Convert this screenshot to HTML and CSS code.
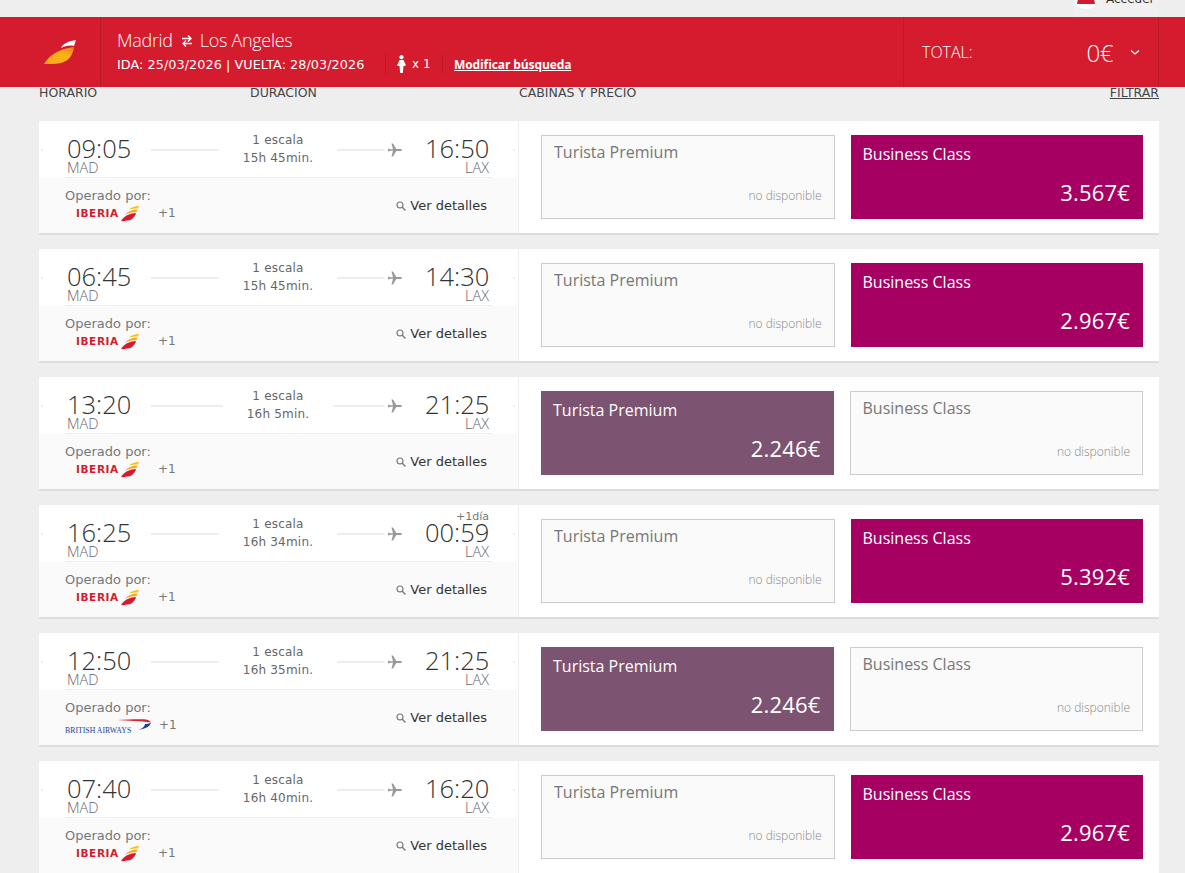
FILE: index.html
```html
<!DOCTYPE html>
<html lang="es">
<head>
    <meta charset="UTF-8">
    <title>Iberia - Resultados</title>
    <link rel="stylesheet" href="styles.css">
</head>
<body>

<!-- iconos repetidos -->
<svg class="sprites">
    <symbol id="plane" viewBox="0 0 14 14"><path d="M0 5.800 H1 L2 6.200 H5 L3.500 0.500 H5 L8.300 6 H12.500 C14.300 6 14.300 8 12.500 8 H8.300 L5 13.500 H3.500 L5 7.800 H2 L1 8.200 H0 Z" fill="#999"/></symbol>
    <symbol id="wing" viewBox="0 0 18 15"><path d="M0 15 C3 10 8 7.500 15 7 C14 11 11 14 7 14.500 C4 15 2 15 0 15 Z" fill="#d51b2e"/><path d="M4 9 C7 5 12 3.500 16.500 3.500 L15.500 6 C11 6 7 7 4 9 Z" fill="#f6a81c"/><path d="M8 3.500 C10 1.500 14 0 18 0 L17 2.500 C14 2.500 11 2.500 8 3.500 Z" fill="#f6c21c"/></symbol>
    <symbol id="lens" viewBox="0 0 10 10"><circle cx="4" cy="4" r="3" fill="none" stroke="#777" stroke-width="1.100"/><path d="M6.300 6.300 L9.500 9.500" stroke="#777" stroke-width="1.300"/></symbol>
</svg>

<div class="top-bar">
    <div class="login">
        <span class="login-icon"><svg width="18" height="16" viewBox="0 0 18 16"><path d="M3 0 H15 L18 16 H0 Z" fill="#d51b2e"/></svg></span>
        <span class="login-text">Acceder</span>
    </div>
</div>

<header class="summary">
    <div class="logo-cell">
        <svg width="32" height="24" viewBox="0 0 32 24">
            <defs><linearGradient id="wing-grad" x1="0" y1="1" x2="1" y2="0"><stop offset="0" stop-color="#f9a51a"/><stop offset="0.6" stop-color="#f8b415"/><stop offset="1" stop-color="#ee7d1d"/></linearGradient></defs>
            <path d="M0 24 C6 15 14 9 30 7 C29 15 25 21 17 23 C11 24.300 5 24 0 24 Z" fill="url(#wing-grad)"/>
            <path d="M17 8 C19 3.500 25 1 32 0 L30 6 C25 5 21 6 17 8 Z" fill="#fff"/>
        </svg>
    </div>
    <div class="route">
        <div class="route-title">Madrid<svg class="swap" width="12" height="14" viewBox="0 0 12 14"><path d="M1 4.500 H10 M7 1.500 L10 4.500 L7 7.500 M11 9.500 H2 M5 6.500 L2 9.500 L5 12.500" fill="none" stroke="#fff" stroke-width="1.400"/></svg>Los Angeles</div>
        <div class="route-info">
            <span class="dates">IDA: 25/03/2026 | VUELTA: 28/03/2026</span>
            <span class="pax"><svg width="9" height="18" viewBox="0 0 9 18"><circle cx="4.500" cy="2.200" r="2.100" fill="#fff"/><path d="M2.500 5 H6.500 L9 10.500 L6.500 11 L5.800 18 H3.200 L2.500 11 L0 10.500 Z" fill="#fff"/></svg> x 1</span>
            <a class="modify" href="#">Modificar búsqueda</a>
        </div>
    </div>
    <div class="total">
        <span>TOTAL:</span>
        <span class="total-price">0€</span>
        <svg class="chevron" width="10" height="7" viewBox="0 0 10 7"><path d="M1 1.500 L5 5 L9 1.500" fill="none" stroke="#fff" stroke-width="1.300"/></svg>
    </div>
</header>

<div class="columns">
    <span class="col-time">HORARIO</span>
    <span class="col-duration">DURACION</span>
    <span class="col-cabin">CABINAS Y PRECIO</span>
    <a class="col-filter" href="#">FILTRAR</a>
</div>

<main class="flights">

    <!-- 1 -->
    <section class="flight">
        <div class="flight-left">
            <div class="times">
                <div class="time"><b>09:05</b><small>MAD</small></div>
                <i class="line"></i>
                <div class="stops">1 escala<br>15h 45min.</div>
                <i class="line"></i>
                <svg class="plane"><use href="#plane"/></svg>
                <div class="time arrive"><b>16:50</b><small>LAX</small></div>
            </div>
            <div class="operator">
                <div class="op-name">Operado por:
                    <div class="op-logo">
                        <span class="iberia">IBERIA</span>
                        <svg class="iberia-wing"><use href="#wing"/></svg>
                        <span class="plus">+1</span>
                    </div>
                </div>
                <a class="details" href="#"><svg class="lens"><use href="#lens"/></svg> Ver detalles</a>
            </div>
        </div>
        <div class="flight-right">
            <div class="cabin empty"><span class="cabin-name">Turista Premium</span><span class="cabin-none">no disponible</span></div>
            <div class="cabin business"><span class="cabin-name">Business Class</span><span class="cabin-price">3.567€</span></div>
        </div>
    </section>

    <!-- 2 -->
    <section class="flight">
        <div class="flight-left">
            <div class="times">
                <div class="time"><b>06:45</b><small>MAD</small></div>
                <i class="line"></i>
                <div class="stops">1 escala<br>15h 45min.</div>
                <i class="line"></i>
                <svg class="plane"><use href="#plane"/></svg>
                <div class="time arrive"><b>14:30</b><small>LAX</small></div>
            </div>
            <div class="operator">
                <div class="op-name">Operado por:
                    <div class="op-logo">
                        <span class="iberia">IBERIA</span>
                        <svg class="iberia-wing"><use href="#wing"/></svg>
                        <span class="plus">+1</span>
                    </div>
                </div>
                <a class="details" href="#"><svg class="lens"><use href="#lens"/></svg> Ver detalles</a>
            </div>
        </div>
        <div class="flight-right">
            <div class="cabin empty"><span class="cabin-name">Turista Premium</span><span class="cabin-none">no disponible</span></div>
            <div class="cabin business"><span class="cabin-name">Business Class</span><span class="cabin-price">2.967€</span></div>
        </div>
    </section>

    <!-- 3 -->
    <section class="flight">
        <div class="flight-left">
            <div class="times">
                <div class="time"><b>13:20</b><small>MAD</small></div>
                <i class="line"></i>
                <div class="stops">1 escala<br>16h 5min.</div>
                <i class="line"></i>
                <svg class="plane"><use href="#plane"/></svg>
                <div class="time arrive"><b>21:25</b><small>LAX</small></div>
            </div>
            <div class="operator">
                <div class="op-name">Operado por:
                    <div class="op-logo">
                        <span class="iberia">IBERIA</span>
                        <svg class="iberia-wing"><use href="#wing"/></svg>
                        <span class="plus">+1</span>
                    </div>
                </div>
                <a class="details" href="#"><svg class="lens"><use href="#lens"/></svg> Ver detalles</a>
            </div>
        </div>
        <div class="flight-right">
            <div class="cabin premium"><span class="cabin-name">Turista Premium</span><span class="cabin-price">2.246€</span></div>
            <div class="cabin empty"><span class="cabin-name">Business Class</span><span class="cabin-none">no disponible</span></div>
        </div>
    </section>

    <!-- 4 -->
    <section class="flight">
        <div class="flight-left">
            <div class="times">
                <div class="time"><b>16:25</b><small>MAD</small></div>
                <i class="line"></i>
                <div class="stops">1 escala<br>16h 34min.</div>
                <i class="line"></i>
                <svg class="plane"><use href="#plane"/></svg>
                <div class="time arrive"><span class="next-day">+1día</span><b>00:59</b><small>LAX</small></div>
            </div>
            <div class="operator">
                <div class="op-name">Operado por:
                    <div class="op-logo">
                        <span class="iberia">IBERIA</span>
                        <svg class="iberia-wing"><use href="#wing"/></svg>
                        <span class="plus">+1</span>
                    </div>
                </div>
                <a class="details" href="#"><svg class="lens"><use href="#lens"/></svg> Ver detalles</a>
            </div>
        </div>
        <div class="flight-right">
            <div class="cabin empty"><span class="cabin-name">Turista Premium</span><span class="cabin-none">no disponible</span></div>
            <div class="cabin business"><span class="cabin-name">Business Class</span><span class="cabin-price">5.392€</span></div>
        </div>
    </section>

    <!-- 5 -->
    <section class="flight">
        <div class="flight-left">
            <div class="times">
                <div class="time"><b>12:50</b><small>MAD</small></div>
                <i class="line"></i>
                <div class="stops">1 escala<br>16h 35min.</div>
                <i class="line"></i>
                <svg class="plane"><use href="#plane"/></svg>
                <div class="time arrive"><b>21:25</b><small>LAX</small></div>
            </div>
            <div class="operator">
                <div class="op-name">Operado por:
                    <div class="op-logo ba-logo">
                        <span class="british">BRITISH AIRWAYS</span>
                        <svg class="ba-swoosh" width="34" height="12" viewBox="0 0 34 12"><path d="M0 1 C12 0.500 22 0 29 0.500 C32 1 33 2 34 3.500 C24 2 12 1.500 0 1 Z" fill="#d5202f"/><path d="M34 4 C33 7 30 9 22 11 C26 9 28 7 28 5 C30 5 32 4.500 34 4 Z" fill="#1f3f8f"/></svg>
                        <span class="plus">+1</span>
                    </div>
                </div>
                <a class="details" href="#"><svg class="lens"><use href="#lens"/></svg> Ver detalles</a>
            </div>
        </div>
        <div class="flight-right">
            <div class="cabin premium"><span class="cabin-name">Turista Premium</span><span class="cabin-price">2.246€</span></div>
            <div class="cabin empty"><span class="cabin-name">Business Class</span><span class="cabin-none">no disponible</span></div>
        </div>
    </section>

    <!-- 6 -->
    <section class="flight">
        <div class="flight-left">
            <div class="times">
                <div class="time"><b>07:40</b><small>MAD</small></div>
                <i class="line"></i>
                <div class="stops">1 escala<br>16h 40min.</div>
                <i class="line"></i>
                <svg class="plane"><use href="#plane"/></svg>
                <div class="time arrive"><b>16:20</b><small>LAX</small></div>
            </div>
            <div class="operator">
                <div class="op-name">Operado por:
                    <div class="op-logo">
                        <span class="iberia">IBERIA</span>
                        <svg class="iberia-wing"><use href="#wing"/></svg>
                        <span class="plus">+1</span>
                    </div>
                </div>
                <a class="details" href="#"><svg class="lens"><use href="#lens"/></svg> Ver detalles</a>
            </div>
        </div>
        <div class="flight-right">
            <div class="cabin empty"><span class="cabin-name">Turista Premium</span><span class="cabin-none">no disponible</span></div>
            <div class="cabin business"><span class="cabin-name">Business Class</span><span class="cabin-price">2.967€</span></div>
        </div>
    </section>

</main>

</body>
</html>
```

FILE: styles.css
```css
* { box-sizing: border-box; margin: 0; padding: 0; }
html, body { height: 873px; overflow: hidden; }
body { font-family: "DejaVu Sans", "Liberation Sans", sans-serif; background: #eee; color: #333; }
a { color: inherit; }
.sprites { display: none; }

/* barra superior */
.top-bar {
    height: 17px;
    display: flex;
    justify-content: flex-end;
    padding-right: 27px;
    overflow: hidden;
}
.login {
    width: 84px;
    height: 17px;
    display: flex;
    align-items: flex-end;
    gap: 8px;
    font-size: 12px;
    line-height: 14px;
    background: #f0f0f0;
    flex-shrink: 0;
}
.login-text { margin-bottom: 11px; }
.login-icon {
    width: 24px;
    height: 24px;
    margin-bottom: 8px;
    padding-bottom: 5px;
    border-radius: 50%;
    background: #fff;
    display: flex;
    align-items: flex-end;
    justify-content: center;
    flex-shrink: 0;
}

/* cabecera roja */
.summary {
    height: 70px;
    background: #d51b2e;
    color: #fff;
    display: flex;
    padding-right: 26px;
}
.logo-cell {
    width: 101px;
    border-right: 1px solid #b81a2a;
    display: flex;
    justify-content: center;
    align-items: center;
    padding-left: 20px;
}
.route { flex: 1; padding: 12px 0 0 16px; }
.route-title {
    font-family: "Open Sans", sans-serif;
    font-weight: 300;
    font-size: 18px;
    line-height: 22px;
    letter-spacing: -0.3px;
}
.swap { margin: 0 7px 0 8px; vertical-align: -1px; }
.route-info { display: flex; align-items: center; margin-top: 1px; height: 24px; font-size: 12px; }
.dates { font-size: 12.800px; letter-spacing: 0.05px; width: 268px; white-space: pre; }
.pax {
    width: 58px;
    height: 20px;
    border-left: 1px solid #b81a2a;
    border-right: 1px solid #b81a2a;
    display: flex;
    align-items: center;
    gap: 6px;
    padding-left: 11px;
    font-size: 12px;
}
.modify { margin-left: 11px; font-family: "Open Sans", sans-serif; font-size: 12px; font-weight: 700; letter-spacing: -0.1px; }
.total {
    width: 256px;
    border-left: 1px solid #b81a2a;
    border-right: 1px solid #b81a2a;
    display: flex;
    align-items: center;
    padding: 0 18px 0 18px;
    font-family: "Open Sans", sans-serif;
    font-size: 16px;
    font-weight: 300;
}
.total-price { margin-left: auto; font-size: 24px; letter-spacing: -0.5px; }
.chevron { margin-left: 17px; }

/* titulos de columnas */
.columns {
    height: 34px;
    display: flex;
    padding: 0 26px 0 39px;
    font-size: 12.500px;
    line-height: 12px;
    color: #444;
}
.col-time { width: 211px; }
.col-duration { width: 269px; }
.col-filter { margin-left: auto; }

/* vuelos */
.flights { padding: 0 26px 0 39px; }
.flight {
    height: 114px;
    margin-bottom: 14px;
    display: flex;
    background: #fff;
    border-bottom: 2px solid #ddd;
}
.flight-left {
    width: 480px;
    border-right: 1px solid #eee;
    display: flex;
    flex-direction: column;
    position: relative;
}
.flight-left::before, .flight-left::after {
    content: "";
    position: absolute;
    top: 28px;
    width: 2px;
    height: 2px;
    background: #eee;
}
.flight-left::before { left: 2px; }
.flight-left::after { right: 3px; }
.times {
    height: 57px;
    margin: 0 26px;
    padding: 0 3px 0 2px;
    display: flex;
    align-items: flex-start;
    border-bottom: 1px solid #eee;
    font-size: 12px;
    color: #666;
}
.time { width: 64px; position: relative; padding-top: 13px; flex-shrink: 0; }
.time b {
    display: block;
    font-family: "Open Sans", sans-serif;
    font-weight: 300;
    font-size: 25.500px;
    line-height: 28px;
    color: #333;
    white-space: nowrap;
}
.time small { display: block; font-family: "Open Sans", sans-serif; font-size: 14.500px; line-height: 12px; margin-top: 0; color: #666; font-weight: 300; }
.arrive { text-align: right; margin-left: 23px; }
.next-day { position: absolute; top: 5px; right: 0; font-size: 11px; line-height: 13px; color: #777; }
.line { flex: 1 1 0; height: 2px; margin-top: 28px; background: #eee; }
.line:first-of-type { flex-basis: 20px; margin-left: 20px; }
.stops { margin: 0 24px; text-align: center; line-height: 18px; padding-top: 10px; font-size: 12px; letter-spacing: 0.2px; color: #666; white-space: nowrap; flex-shrink: 0; }
.plane { width: 14px; height: 14px; margin: 22px 0 0 3px; flex-shrink: 0; }

.operator {
    flex: 1;
    background: #fafafa;
    display: flex;
    justify-content: space-between;
    padding: 10px 31px 0 26px;
    color: #777;
    font-size: 13px;
}
.op-name { line-height: 16px; }
.op-logo { display: flex; align-items: center; height: 18px; padding-left: 11px; }
.iberia { font-weight: 700; font-size: 10.500px; letter-spacing: 0.6px; color: #d51b2e; width: 45px; white-space: nowrap; }
.iberia-wing { width: 18px; height: 15px; flex-shrink: 0; }
.plus { margin-left: 19px; font-size: 12px; color: #777; }
.ba-logo { padding-left: 0; }
.british { font-family: "Liberation Serif", serif; font-size: 7.800px; color: #1f3f8f; width: 52px; margin-top: 12px; white-space: nowrap; }
.ba-swoosh { flex-shrink: 0; }
.ba-logo .plus { margin-left: 8px; }
.details { display: flex; align-items: center; gap: 4px; height: 16px; margin-top: 9px; text-decoration: none; color: #333; }
.lens { width: 10px; height: 10px; margin-top: 2px; }

/* cabinas */
.flight-right { flex: 1; padding: 14px 16px 0 22px; display: flex; gap: 16px; }
.cabin {
    flex: 1 1 0;
    height: 84px;
    display: flex;
    flex-direction: column;
    justify-content: space-between;
    font-family: "Open Sans", sans-serif;
}
.empty { background: #fafafa; border: 1px solid #ccc; padding: 6px 12px 13px 12px; }
.empty .cabin-name { color: #777; }
.cabin-none { text-align: right; font-size: 12px; font-weight: 300; line-height: 18px; color: #888; }
.business, .premium { color: #fff; padding: 9px 13px 14px 12px; }
.business { background: #a60063; }
.premium { background: #7c5370; }
.cabin-name { font-size: 16px; line-height: 20px; }
.cabin-price { text-align: right; font-size: 22px; letter-spacing: 0.2px; line-height: 26px; }
```
